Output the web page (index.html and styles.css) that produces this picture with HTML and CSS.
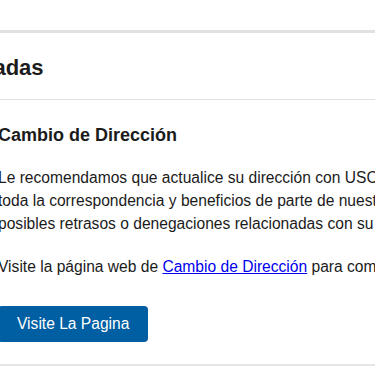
FILE: index.html
```html
<!DOCTYPE html>
<html lang="es">
<head>
<meta charset="utf-8">
<title>Acciones Recomendadas</title>
<link rel="stylesheet" href="styles.css">
</head>
<body>
<div class="page">
  <section class="panel">
    <div class="panel-head">
      <h2 class="panel-title">Acciones Recomendadas</h2>
    </div>
    <div class="panel-body">
      <h3 class="item-title">Cambio de Dirección</h3>
      <p class="item-text">Le recomendamos que actualice su dirección con USCIS para que reciba toda la correspondencia y beneficios de parte de nuestra agencia y evitar posibles retrasos o denegaciones relacionadas con su caso.</p>
      <p class="item-text">Visite la página web de <a class="item-link" href="#">Cambio de Dirección</a> para completar el proceso.</p>
      <a class="btn" href="#">Visite La Pagina</a>
    </div>
  </section>
</div>
</body>
</html>
```

FILE: styles.css
```css
html, body {
  margin: 0;
  padding: 0;
  background: #ffffff;
}

body {
  font-family: "Liberation Sans", Arial, sans-serif;
  color: #1b1b1b;
  overflow: hidden;
}

.page {
  padding-top: 30px;
}

.panel {
  border-top: 3px solid #dfe1e2;
  border-bottom: 2px solid #e6e6e6;
}

.panel-head {
  padding: 22px 0 18px;
  border-bottom: 1px solid #dfe1e2;
}

.panel-title {
  margin: 0 0 0 -223px;
  font-size: 22px;
  line-height: 1.2;
  font-weight: 700;
  white-space: nowrap;
}

.panel-body {
  width: 525px;
  margin-left: -2px;
  padding: 24.6px 0 22px;
}

.item-title {
  margin: 0 0 19px;
  font-size: 18px;
  line-height: 1.2;
  font-weight: 700;
}

.item-text {
  margin: 0 0 19px;
  font-size: 15.6px;
  line-height: 1.5;
}

.item-link {
  color: #0000ee;
  text-decoration: underline;
}

.btn {
  display: flex;
  align-items: center;
  width: max-content;
  height: 36px;
  margin-top: 27.7px;
  padding: 0 19px;
  background: #005ea2;
  color: #ffffff;
  font-size: 15.6px;
  text-decoration: none;
  border-radius: 4px;
}
```
